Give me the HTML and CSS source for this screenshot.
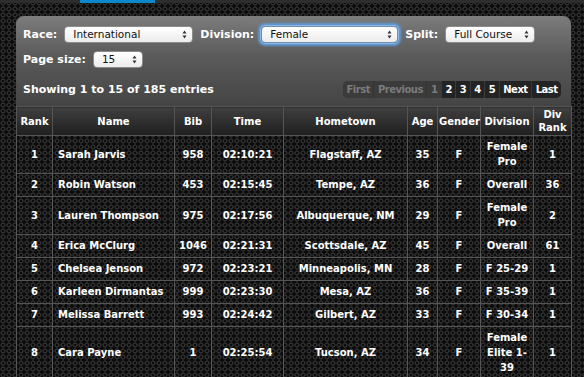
FILE: index.html
```html
<!DOCTYPE html>
<html lang="en">
<head>
    <meta charset="UTF-8">
    <meta name="viewport" content="width=device-width, initial-scale=1.0">
    <title>Race Results</title>
    <link rel="stylesheet" href="styles.css">
</head>
<body>

<div class="topbar">
    <div class="topbar-tab"></div>
</div>

<div class="results">
    <div class="filters">
        <div class="filter-row">
            <label class="filter-label" for="race">Race:</label>
            <span class="select select-race">
                <select id="race"><option>International</option></select>
                <svg class="select-arrows" width="5" height="9" viewBox="0 0 5 9"><path d="M0.5 3.5 L2.5 0.5 L4.5 3.5 Z M0.5 5.5 L2.5 8.5 L4.5 5.5 Z"/></svg>
            </span>
            <label class="filter-label" for="division">Division:</label>
            <span class="select select-division is-focused">
                <select id="division"><option>Female</option></select>
                <svg class="select-arrows" width="5" height="9" viewBox="0 0 5 9"><path d="M0.5 3.5 L2.5 0.5 L4.5 3.5 Z M0.5 5.5 L2.5 8.5 L4.5 5.5 Z"/></svg>
            </span>
            <label class="filter-label" for="split">Split:</label>
            <span class="select select-split">
                <select id="split"><option>Full Course</option></select>
                <svg class="select-arrows" width="5" height="9" viewBox="0 0 5 9"><path d="M0.5 3.5 L2.5 0.5 L4.5 3.5 Z M0.5 5.5 L2.5 8.5 L4.5 5.5 Z"/></svg>
            </span>
        </div>
        <div class="filter-row">
            <label class="filter-label" for="pagesize">Page size:</label>
            <span class="select select-pagesize">
                <select id="pagesize"><option>15</option></select>
                <svg class="select-arrows" width="5" height="9" viewBox="0 0 5 9"><path d="M0.5 3.5 L2.5 0.5 L4.5 3.5 Z M0.5 5.5 L2.5 8.5 L4.5 5.5 Z"/></svg>
            </span>
        </div>
        <div class="info-row">
            <div class="info-text">Showing 1 to 15 of 185 entries</div>
            <div class="pager">
                <span class="pager-item disabled">First</span>
                <span class="pager-item disabled">Previous</span>
                <span class="pager-item current">1</span>
                <a class="pager-item" href="#">2</a>
                <a class="pager-item" href="#">3</a>
                <a class="pager-item" href="#">4</a>
                <a class="pager-item" href="#">5</a>
                <a class="pager-item" href="#">Next</a>
                <a class="pager-item" href="#">Last</a>
            </div>
        </div>
    </div>

    <table class="results-table">
        <colgroup>
            <col style="width:36px">
            <col style="width:122px">
            <col style="width:37px">
            <col style="width:72px">
            <col style="width:124px">
            <col style="width:30px">
            <col style="width:43px">
            <col style="width:53px">
            <col style="width:38px">
        </colgroup>
        <thead>
            <tr>
                <th>Rank</th>
                <th>Name</th>
                <th>Bib</th>
                <th>Time</th>
                <th>Hometown</th>
                <th>Age</th>
                <th>Gender</th>
                <th>Division</th>
                <th>Div<br>Rank</th>
            </tr>
        </thead>
        <tbody>
            <tr>
                <td>1</td><td class="name">Sarah Jarvis</td><td>958</td><td>02:10:21</td>
                <td>Flagstaff, AZ</td><td>35</td><td>F</td><td>Female<br>Pro</td><td>1</td>
            </tr>
            <tr>
                <td>2</td><td class="name">Robin Watson</td><td>453</td><td>02:15:45</td>
                <td>Tempe, AZ</td><td>36</td><td>F</td><td>Overall</td><td>36</td>
            </tr>
            <tr>
                <td>3</td><td class="name">Lauren Thompson</td><td>975</td><td>02:17:56</td>
                <td>Albuquerque, NM</td><td>29</td><td>F</td><td>Female<br>Pro</td><td>2</td>
            </tr>
            <tr>
                <td>4</td><td class="name">Erica McClurg</td><td>1046</td><td>02:21:31</td>
                <td>Scottsdale, AZ</td><td>45</td><td>F</td><td>Overall</td><td>61</td>
            </tr>
            <tr>
                <td>5</td><td class="name">Chelsea Jenson</td><td>972</td><td>02:23:21</td>
                <td>Minneapolis, MN</td><td>28</td><td>F</td><td>F 25-29</td><td>1</td>
            </tr>
            <tr>
                <td>6</td><td class="name">Karleen Dirmantas</td><td>999</td><td>02:23:30</td>
                <td>Mesa, AZ</td><td>36</td><td>F</td><td>F 35-39</td><td>1</td>
            </tr>
            <tr>
                <td>7</td><td class="name">Melissa Barrett</td><td>993</td><td>02:24:42</td>
                <td>Gilbert, AZ</td><td>33</td><td>F</td><td>F 30-34</td><td>1</td>
            </tr>
            <tr>
                <td>8</td><td class="name">Cara Payne</td><td>1</td><td>02:25:54</td>
                <td>Tucson, AZ</td><td>34</td><td>F</td><td>Female<br>Elite 1-<br>39</td><td>1</td>
            </tr>
        </tbody>
    </table>
</div>

</body>
</html>
```

FILE: styles.css
```css
html, body {
    margin: 0;
    padding: 0;
    height: 100%;
    overflow: hidden;
}

body {
    background-color: #0c0c0c;
    background-image: radial-gradient(circle at 3px 3px, transparent 1.3px, #2e2e2e 1.6px, #2e2e2e 2.4px, transparent 2.8px);
    background-size: 6px 6px;
    color: white;
    font-family: "DejaVu Sans", Verdana, sans-serif;
    font-weight: bold;
}

.topbar {
    height: 3px;
    background: #2e2e2e;
    display: flex;
}

.topbar-tab {
    margin-left: 80px;
    width: 75px;
    background: #0b88cc;
}

.results {
    width: 555px;
    margin: 13px 0 0 16px;
}

/* Filter panel */
.filters {
    background: linear-gradient(#7c7c7c, #5a5a5a 45%, #444);
    border-radius: 8px 8px 0 0;
    padding: 10px 10px 8px 7px;
}

.filter-row {
    display: flex;
    align-items: center;
    gap: 6px;
    height: 17px;
    margin-bottom: 8px;
}

.filter-label {
    font-size: 11px;
    line-height: 17px;
    margin-right: 1px;
}

.select {
    position: relative;
    display: block;
    height: 17px;
}

.select select {
    appearance: none;
    -webkit-appearance: none;
    display: block;
    width: 100%;
    height: 17px;
    margin: 0;
    padding: 0 0 0 8px;
    border: 1px solid #8c8c8c;
    border-radius: 4px;
    background: linear-gradient(#ffffff, #ececec);
    color: #111;
    font-family: "DejaVu Sans", sans-serif;
    font-size: 10.5px;
    font-weight: normal;
    line-height: 15px;
    box-sizing: border-box;
    outline: none;
}

.select-arrows {
    position: absolute;
    top: 4px;
    right: 6px;
    fill: #333;
    pointer-events: none;
}

.select-race { width: 129px; margin-right: 1px; }
.select-division { width: 137px; margin-right: 1px; }
.select-split { width: 90px; }
.select-pagesize { width: 50px; }

.select.is-focused select {
    box-shadow: 0 0 0 1px #8db6e0, 0 0 2px 3px #5e98d4;
    border-color: #6f8fb5;
}

.info-row {
    display: flex;
    justify-content: space-between;
    align-items: center;
    margin-top: 13px;
}

.info-text {
    font-size: 11px;
}

/* Pagination */
.pager {
    display: flex;
    background: #3b3b3b;
    border-radius: 5px;
    overflow: hidden;
    height: 17px;
}

.pager-item {
    padding: 0 3.5px;
    font-size: 10px;
    letter-spacing: -0.5px;
    line-height: 17px;
    color: white;
    text-decoration: none;
    background: #232323;
    border-left: 1px solid #3a3a3a;
}

.pager-item.disabled,
.pager-item.current {
    background: #3b3b3b;
    color: #7b7b7b;
    border-left: 1px solid #333;
}

.pager-item:first-child {
    border-left: none;
}

/* Results table */
.results-table {
    width: 555px;
    table-layout: fixed;
    border-collapse: collapse;
    font-size: 10px;
}

.results-table th {
    background: linear-gradient(#3f3f3f, #1f1f1f);
    border: 1px solid #555;
    padding: 1px 1px;
    line-height: 13px;
    height: 26px;
    text-align: center;
    vertical-align: middle;
}

.results-table td {
    border: 1px solid #555;
    padding: 3px 3px 4px;
    line-height: 15px;
    text-align: center;
    vertical-align: middle;
    white-space: nowrap;
}

.results-table td.name {
    text-align: left;
    padding-left: 5px;
}
```
